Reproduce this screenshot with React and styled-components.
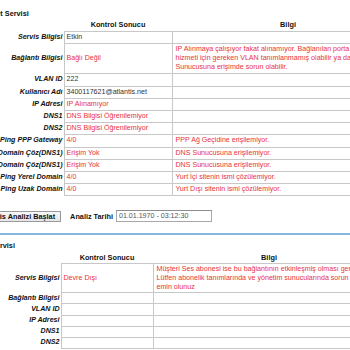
import React from 'react';
import styled, { createGlobalStyle } from 'styled-components';

const GlobalStyle = createGlobalStyle`
  html, body {
    margin: 0;
    padding: 0;
    overflow: hidden;
    background: #fff;
  }
  body {
    font-family: "Liberation Sans", Arial, sans-serif;
    font-size: 7.1px;
    color: #222;
  }
`;

const Page = styled.div`
  margin-left: -24px;
  padding-top: 8.5px;
  width: 430px;
`;

const SectionTitle = styled.div`
  font-weight: bold;
  font-size: 7.3px;
  line-height: 9px;
  color: #111;
  margin-bottom: 1px;
`;

const ResultTable = styled.table`
  border-collapse: collapse;
  table-layout: fixed;
  width: ${p => p.$width}px;
`;

const Col = styled.col`
  width: ${p => p.$w}px;
`;

const HeadCell = styled.th`
  font-weight: bold;
  font-size: 7.3px;
  text-align: center;
  padding: 1px 2px;
  height: 10px;
  line-height: 9px;
  color: #111;
`;

const LabelCell = styled.th`
  text-align: right;
  font-weight: bold;
  font-style: italic;
  padding: 1px 1px 1px 0;
  line-height: 9.2px;
  white-space: nowrap;
  color: #111;
`;

const DataCell = styled.td`
  border: 1px solid #c8c8c8;
  padding: 1px 2px 1px ${p => p.$indent || 2}px;
  line-height: ${p => p.$lh || 9.2}px;
  color: ${p => (p.$red ? '#e8323c' : '#333')};
  vertical-align: middle;
  white-space: nowrap;
  overflow: hidden;
`;

const Toolbar = styled.div`
  display: flex;
  align-items: center;
  margin-top: 14px;
`;

const ActionButton = styled.button`
  font-family: inherit;
  font-size: 7.3px;
  font-weight: bold;
  color: #111;
  height: 11px;
  line-height: 9px;
  padding: 0 5px;
  margin: 0 9px 0 2px;
  border: 1px solid #9a9a9a;
  background: linear-gradient(#f7f7f7, #e6e6e6);
  border-radius: 0;
`;

const FieldLabel = styled.span`
  font-weight: bold;
  font-size: 7.3px;
  color: #111;
  margin-right: 3px;
`;

const DateInput = styled.input`
  font-family: inherit;
  font-size: 7.1px;
  color: #555;
  width: 96px;
  height: 12px;
  box-sizing: border-box;
  padding: 0 2px;
  border: 1px solid #a8a8a8;
  border-top-color: #8c8c8c;
  outline: none;
`;

const Divider = styled.div`
  margin-top: 11px;
  border-top: 2px solid #88b7dd;
  margin-bottom: 6px;
`;

const internetRows = [
  { label: 'Servis Bilgisi', value: 'Etkin' },
  {
    label: 'Bağlantı Bilgisi',
    value: 'Bağlı Değil',
    red: true,
    info: [
      'IP Alınmaya çalışıyor fakat alınamıyor. Bağlanılan porta internet',
      'hizmeti için gereken VLAN tanımlanmamış olabilir ya da PPP',
      'Sunucusuna erişimde sorun olabilir.',
    ],
  },
  { label: 'VLAN ID', value: '222' },
  { label: 'Kullanıcı Adı', value: '3400117621@atlantis.net' },
  { label: 'IP Adresi', value: 'IP Alınamıyor', red: true },
  { label: 'DNS1', value: 'DNS Bilgisi Öğrenilemiyor', red: true },
  { label: 'DNS2', value: 'DNS Bilgisi Öğrenilemiyor', red: true },
  { label: 'Ping PPP Gateway', value: '4/0', red: true, info: ['PPP Ağ Geçidine erişilemiyor.'] },
  { label: 'Domain Çöz(DNS1)', value: 'Erişim Yok', red: true, info: ['DNS Sunucusuna erişilemiyor.'] },
  { label: 'Domain Çöz(DNS1)', value: 'Erişim Yok', red: true, info: ['DNS Sunucusuna erişilemiyor.'] },
  { label: 'Ping Yerel Domain', value: '4/0', red: true, info: ['Yurt İçi sitenin ismi çözülemiyor.'] },
  { label: 'Ping Uzak Domain', value: '4/0', red: true, info: ['Yurt Dışı sitenin ismi çözülemiyor.'] },
];

const voiceRows = [
  {
    label: 'Servis Bilgisi',
    value: 'Devre Dışı',
    red: true,
    info: [
      'Müşteri Ses abonesi ise bu bağlantının etkinleşmiş olması gerekir.',
      'Lütfen abonelik tanımlarında ve yönetim sunucularında sorun olmadığından',
      'emin olunuz',
    ],
  },
  { label: 'Bağlantı Bilgisi' },
  { label: 'VLAN ID' },
  { label: 'IP Adresi' },
  { label: 'DNS1' },
  { label: 'DNS2' },
];

function ResultSection({ title, rows, widths, infoLh }) {
  const total = widths.reduce((a, b) => a + b, 0);
  return (
    <>
      <SectionTitle>{title}</SectionTitle>
      <ResultTable $width={total}>
        <colgroup>
          {widths.map((w, i) => <Col key={i} $w={w} />)}
        </colgroup>
        <thead>
          <tr>
            <HeadCell></HeadCell>
            <HeadCell>Kontrol Sonucu</HeadCell>
            <HeadCell>Bilgi</HeadCell>
          </tr>
        </thead>
        <tbody>
          {rows.map((row, i) => (
            <tr key={i}>
              <LabelCell>{row.label}</LabelCell>
              <DataCell $red={row.red}>{row.value}</DataCell>
              <DataCell $red $indent={3} $lh={row.info && row.info.length > 1 ? infoLh : undefined}>
                {row.info && row.info.map((line, j) => (
                  <React.Fragment key={j}>
                    {j > 0 && <br />}
                    {line}
                  </React.Fragment>
                ))}
              </DataCell>
            </tr>
          ))}
        </tbody>
      </ResultTable>
    </>
  );
}

export default function App() {
  return (
    <Page>
      <GlobalStyle />
      <ResultSection
        title="İnternet Servisi"
        rows={internetRows}
        widths={[88, 108, 232]}
        infoLh={9.2}
      />
      <Toolbar>
        <ActionButton type="button">Servis Analizi Başlat</ActionButton>
        <FieldLabel>Analiz Tarihi</FieldLabel>
        <DateInput readOnly value="01.01.1970 - 03:12:30" />
      </Toolbar>
      <Divider />
      <ResultSection
        title="Ses Servisi"
        rows={voiceRows}
        widths={[85, 92, 232]}
        infoLh={8.6}
      />
    </Page>
  );
}
